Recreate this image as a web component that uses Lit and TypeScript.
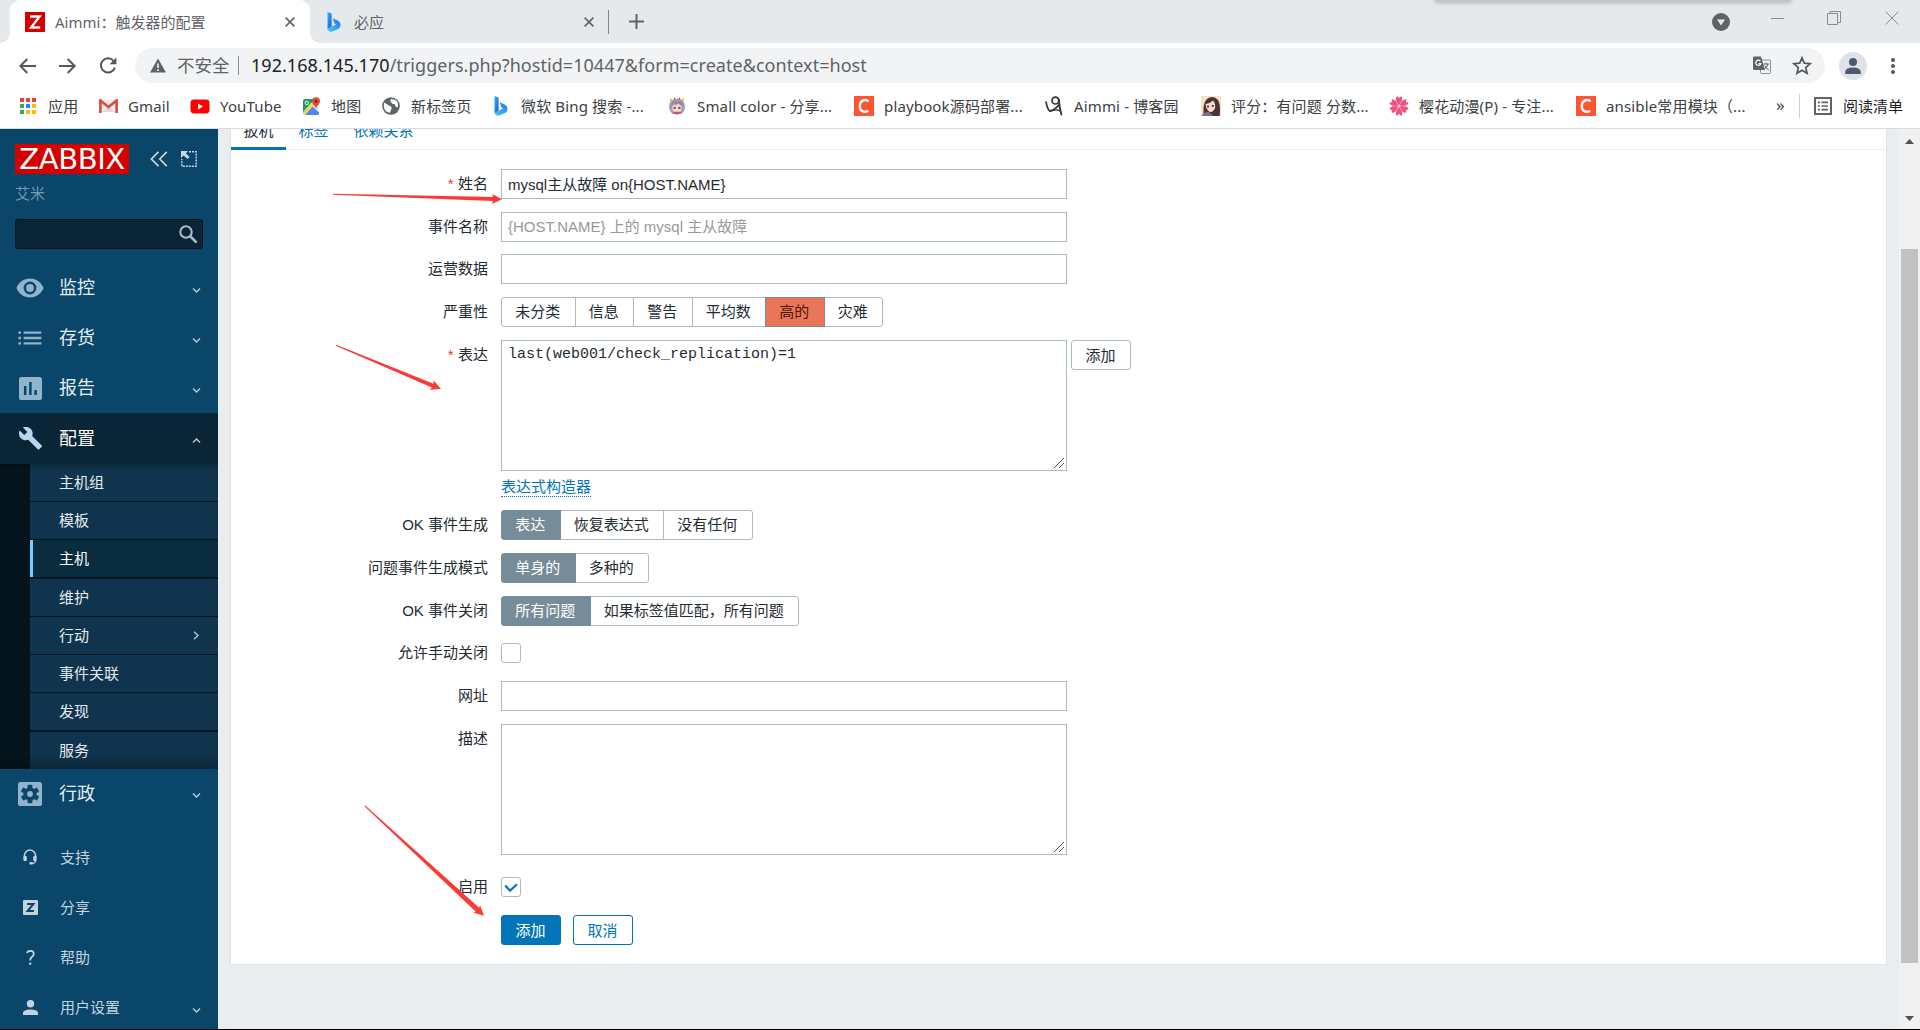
import { LitElement, html, svg, css, nothing, type TemplateResult } from "lit";
import { customElement } from "lit/decorators.js";
import { classMap } from "lit/directives/class-map.js";

const CHEVRON_DOWN = svg`<path d="M1 1.5 L4.5 5 L8 1.5" fill="none" stroke="currentColor" stroke-width="1.4"/>`;
const CHEVRON_UP = svg`<path d="M1 5.5 L4.5 2 L8 5.5" fill="none" stroke="currentColor" stroke-width="1.4"/>`;

const bingIcon = html`<svg width="14" height="20" viewBox="0 0 14 20">
  <defs>
    <linearGradient id="b" x1="0" y1="0" x2="1" y2="1">
      <stop offset="0" stop-color="#2fb9f5" /><stop offset="1" stop-color="#1b4fe0" />
    </linearGradient>
    <linearGradient id="c" x1="0" y1="1" x2="1" y2="0">
      <stop offset="0" stop-color="#3fd3f2" /><stop offset="1" stop-color="#1f6ff0" />
    </linearGradient>
  </defs>
  <path d="M0.5 0 L4.6 1.6 V14.5 L0.5 17.5 Z" fill="url(#b)" />
  <path d="M5.8 6.2 L11.5 9 Q13.8 10.5 13.5 13.5 Q13 16 11 17 L4.6 19.8 Q1.5 20 0.5 16.8 L9 12.5 L7.2 11.2 Z" fill="url(#c)" />
</svg>`;

const cIcon = html`<svg width="20" height="20" viewBox="0 0 20 20">
  <rect width="20" height="20" fill="#fc5531" />
  <path d="M14.6 5.2 C10.5 2.6 6 4.6 5.8 9.6 C5.6 15.2 9.6 17 14.2 15" fill="none" stroke="#fff" stroke-width="2.4" />
</svg>`;

interface Bookmark { text: string; icon: TemplateResult; }

const bookmarks: Bookmark[] = [
  {
    text: "应用",
    icon: html`<svg width="16" height="16" viewBox="0 0 16 16">
      <g fill="#ea4335"><rect width="4" height="4" /><rect x="6" width="4" height="4" /><rect x="12" width="4" height="4" /></g>
      <rect y="6" width="4" height="4" fill="#34a853" /><rect x="6" y="6" width="4" height="4" fill="#1a8cff" /><rect x="12" y="6" width="4" height="4" fill="#fbbc05" />
      <rect y="12" width="4" height="4" fill="#34a853" /><rect x="6" y="12" width="4" height="4" fill="#fbbc05" /><rect x="12" y="12" width="4" height="4" fill="#fbbc05" />
    </svg>`,
  },
  {
    text: "Gmail",
    icon: html`<svg width="19" height="14" viewBox="0 0 19 14">
      <path d="M2 0.5 H17 L18 2 V13 H1 V2 Z" fill="#eceff1" />
      <path d="M3 13 L9.5 7.5 L16 13 Z" fill="#d8dcdf" />
      <path d="M1.4 14 V1.5 L9.5 8 L17.6 1.5 V14" fill="none" stroke="#de4a3c" stroke-width="2.6" />
    </svg>`,
  },
  {
    text: "YouTube",
    icon: html`<svg width="20" height="15" viewBox="0 0 20 15"><rect x="0.5" y="0.5" width="19" height="14" rx="3.4" fill="#f00" /><path d="M8 4.4 L13 7.5 L8 10.6 Z" fill="#fff" /></svg>`,
  },
  {
    text: "地图",
    icon: html`<svg width="19" height="19" viewBox="0 0 19 19">
      <rect x="1" y="2" width="16" height="16" rx="2" fill="#e8eaed" />
      <path d="M1 4 Q1 2 3 2 H13 L1 15 Z" fill="#1f9d58" />
      <path d="M1 15.5 L9 8 L17 15.5 V17 Q17 18 15 18 H4 Z" fill="#4a89f3" />
      <path d="M1 16 L13 3 L15 5 L3 18 Q1 18 1 16Z" fill="#fdd34a" />
      <path d="M5 17.9 L9.6 12.3 L15.5 18 Z" fill="#4a89f3" />
      <path d="M14 0.3 A4 4 0 0 1 18 4.3 C18 7.5 14.6 8.6 14 12 C13.4 8.6 10 7.5 10 4.3 A4 4 0 0 1 14 0.3 Z" fill="#e14b3b" />
      <circle cx="14" cy="4.3" r="1.4" fill="#7d1f16" />
      <circle cx="4.8" cy="6" r="1.7" fill="none" stroke="#fff" stroke-width="0.9" />
    </svg>`,
  },
  {
    text: "新标签页",
    icon: html`<svg width="18" height="18" viewBox="0 0 18 18"><circle cx="9" cy="9" r="8.8" fill="#5f6368" />
      <path d="M2.2 5.6 Q6 8.2 8.4 9.2 Q10.2 9.6 9.6 11.6 Q8.6 12.4 8.8 14 Q8 16 6.6 15.6 Q2 14 1.8 9 Z" fill="#fff" />
      <path d="M9 2 Q7.6 4.4 9.4 5.2 Q9.6 7.4 12 7 Q14 7.6 13.4 9.6 L15.8 10.4 Q17 5 13 2.8 Z" fill="#fff" /></svg>`,
  },
  { text: "微软 Bing 搜索 -...", icon: bingIcon },
  {
    text: "Small color - 分享...",
    icon: html`<svg width="18" height="18" viewBox="0 0 18 18">
      <path d="M9 1.6 Q16.6 2 17 9.4 Q17 14 13 17 H5 Q1 14 1 9.4 Q1.4 2 9 1.6 Z" fill="#a59cb8" />
      <path d="M4.4 9 Q9 5 13.6 9 V12 Q13 15.5 9 16 Q5 15.5 4.4 12 Z" fill="#f4d9d2" />
      <path d="M3.4 9.4 L6 5.4 L8 8.4 L10 5.4 L14.6 9.4 L14 4.4 H4 Z" fill="#8d86a6" />
      <rect x="5.6" y="9.8" width="2" height="2.2" fill="#9b3f4f" /><rect x="10.4" y="9.8" width="2" height="2.2" fill="#9b3f4f" />
      <path d="M4.5 16 Q9 18.8 13.5 16 L12 14.8 H6 Z" fill="#c5555f" />
      <path d="M2 1 L4.6 2.8 L2.4 5Z M16 1 L13.4 2.8 L15.6 5Z" fill="#e7b93c" />
      <path d="M6.4 0 L7.6 2.4 H5.6Z M11.6 0 L12.4 2.4 H10.4Z" fill="#a3524f" />
    </svg>`,
  },
  { text: "playbook源码部署...", icon: cIcon },
  {
    text: "Aimmi - 博客园",
    icon: html`<svg width="18" height="20" viewBox="0 0 18 20" fill="none" stroke="#2f3237" stroke-linecap="round">
      <path d="M1 6 Q2.4 13 4.6 15 Q9 14.6 14.4 8.6" stroke-width="1.6" />
      <circle cx="10.4" cy="4.6" r="3.4" stroke-width="1.7" /><path d="M13.8 3.6 Q14.4 12 16.4 18.6" stroke-width="1.8" />
      <path d="M5 15.4 Q11 12.4 15 15" stroke-width="1.3" />
    </svg>`,
  },
  {
    text: "评分：有问题 分数...",
    icon: html`<svg width="20" height="20" viewBox="0 0 20 20">
      <rect width="20" height="20" fill="#f3e4c6" />
      <path d="M3 20 Q1 8 6 3 Q12 -1.5 17 4 Q20 9 18.6 20 Z" fill="#4b3234" />
      <path d="M4.6 8 Q9 7.4 12 4.4 Q15 8 14 12.4 Q12 16 9 16 Q5 14 4.6 8 Z" fill="#f8dcc9" />
      <path d="M0.5 20 Q3 15.6 8 16 L12.6 20 Z" fill="#77708f" />
      <rect x="6" y="9.6" width="2" height="1.8" fill="#5b2f33" /><rect x="10.8" y="9" width="2" height="1.8" fill="#5b2f33" />
    </svg>`,
  },
  {
    text: "樱花动漫(P) - 专注...",
    icon: html`<svg width="20" height="20" viewBox="-10 -10 20 20" fill="#f0527f">
      ${[0, 60, 120, 180, 240, 300].map(
        (a) => svg`<path d="M0 0 L-2.9 -5.4 Q-3.6 -9.2 -1.7 -9.8 L0 -7.8 L1.7 -9.8 Q3.6 -9.2 2.9 -5.4 Z" transform="rotate(${a})"/>`,
      )}
      <circle r="1.6" fill="#fbd3de" />
    </svg>`,
  },
  { text: "ansible常用模块（...", icon: cIcon },
];

@customElement("browser-chrome")
export class BrowserChrome extends LitElement {
  static styles = css`
    :host {
      display: block;
      height: 129px;
      box-sizing: border-box;
      border-bottom: 1px solid #d9dbde;
      background: #fff;
      color: #5f6368;
      font: 15px/20px "Noto Sans", "Noto Sans CJK SC", sans-serif;
      overflow: hidden;
    }
    svg { display: block; flex: none; }
    .strip { display: flex; align-items: center; height: 43px; background: #e6e9ec; position: relative; }
    .tab { display: flex; align-items: center; box-sizing: border-box; height: 43px; }
    .active { width: 300px; margin-left: 10px; padding: 0 15px; background: #fff; border-radius: 10px 10px 0 0; position: relative; }
    .active::before, .active::after { content: ""; position: absolute; bottom: 0; width: 10px; height: 10px; }
    .active::before { left: -10px; background: radial-gradient(circle at 0 0, transparent 9.5px, #fff 10px); }
    .active::after { right: -10px; background: radial-gradient(circle at 100% 0, transparent 9.5px, #fff 10px); }
    .idle { width: 298px; padding: 0 14px 0 17px; border: 0; }
    .title { flex: 1; padding-left: 10px; white-space: nowrap; }
    .idle .title { padding-left: 13px; }
    .sep { width: 1px; height: 24px; background: #84888c; margin-right: 20px; }
    .controls { display: flex; align-items: center; margin-left: auto; padding-right: 21px; }
    .controls svg:nth-child(1) { margin: 0 41px 0 0; }
    .controls svg:nth-child(2) { margin: -7px 42px 0 0; }
    .controls svg:nth-child(3) { margin: -7px 44px 0 0; }
    .controls svg:nth-child(4) { margin: -7px 0 0 0; }
    .shade { position: absolute; left: 1436px; top: -6px; width: 354px; height: 8px; background: #c4c6c9; box-shadow: 0 0 4px 1px #b4b6ba; }
    .bar { display: flex; align-items: center; height: 45px; padding: 0 25px 0 19px; }
    .nav { display: flex; gap: 23px; width: 116px; align-items: center; }
    .omni { flex: 1; display: flex; align-items: center; height: 35px; border-radius: 18px; background: #f1f3f4; padding: 0 13px 0 15px; font-size: 17.5px; }
    .unsafe { margin: 0 8px 2px 11px; }
    .vsep { width: 1.5px; height: 19px; background: #8d9195; margin-right: 12px; }
    .url { flex: 1; font-size: 18px; letter-spacing: 0.04px; white-space: nowrap; padding-bottom: 2px; }
    .host { color: #202124; }
    .star { margin-left: 21px; }
    .avatar { margin: 0 24px 0 14px; }
    .marks { display: grid; grid-template-columns: 80px 92px 111px 80px 110px 176px 187px 190px 157px 188px 187px 200px 1fr; padding-left: 18px; height: 36px; align-items: center; color: #3c4043; }
    .mark { display: flex; align-items: center; gap: 10px; white-space: nowrap; letter-spacing: 0.15px; }
    .fav { width: 20px; display: flex; justify-content: center; flex: none; }
    .tail { display: flex; align-items: center; white-space: nowrap; }
    .more { width: 23px; font-size: 17px; line-height: 16px; padding-bottom: 3px; box-sizing: border-box; }
    .rule { width: 1px; height: 24px; background: #cfd2d5; margin-right: 14px; }
    .list { margin-right: 11px; }
    .reading { color: #202124; }
  `;

  private cross() {
    return html`<svg width="10" height="10" viewBox="0 0 10 10"><path d="M0.6 0.6 L9.4 9.4 M9.4 0.6 L0.6 9.4" stroke="#5f6368" stroke-width="1.6" /></svg>`;
  }

  render() {
    return html`
      <div class="strip">
        <div class="tab active">
          <svg width="20" height="20" viewBox="0 0 20 20"><rect width="20" height="20" fill="#d40000" /><path d="M5 4.5 H14.6 L6 15.5 H15.2" fill="none" stroke="#fff" stroke-width="2.3" /></svg>
          <span class="title">Aimmi：触发器的配置</span>${this.cross()}
        </div>
        <div class="tab idle">${bingIcon}<span class="title">必应</span>${this.cross()}</div>
        <div class="sep"></div>
        <svg width="15" height="15" viewBox="0 0 15 15"><path d="M7.5 0 V15 M0 7.5 H15" stroke="#5f6368" stroke-width="2" /></svg>
        <div class="controls">
          <svg width="18" height="18" viewBox="0 0 18 18"><circle cx="9" cy="9" r="9" fill="#5f6368" /><path d="M5 6.5 H13 L9 12.5 Z" fill="#e6e9ec" /></svg>
          <svg width="14" height="14" viewBox="0 0 14 14"><path d="M0 7.5 H13" stroke="#8a8d90" /></svg>
          <svg width="14" height="14" viewBox="0 0 14 14"><path d="M0.5 2.5 H10.5 V13.5 H0.5 Z M3 2.5 V0.5 H13.5 V11.5 H10.5" fill="none" stroke="#8a8d90" /></svg>
          <svg width="14" height="14" viewBox="0 0 14 14"><path d="M0.5 0.5 L13.5 13.5 M13.5 0.5 L0.5 13.5" stroke="#8a8d90" /></svg>
        </div>
        <div class="shade"></div>
      </div>
      <div class="bar">
        <div class="nav">
          <svg width="17" height="16" viewBox="0 0 17 16"><path d="M17 8 H1.5 M8.3 1 L1.3 8 L8.3 15" fill="none" stroke="#54585c" stroke-width="2" /></svg>
          <svg width="17" height="16" viewBox="0 0 17 16"><path d="M0 8 H15.5 M8.7 1 L15.7 8 L8.7 15" fill="none" stroke="#54585c" stroke-width="2" /></svg>
          <svg width="18" height="17" viewBox="0 0 18 17"><path d="M14.6 4 A7.1 7.1 0 1 0 15.8 10.6" fill="none" stroke="#54585c" stroke-width="2" /><path d="M17.4 0.5 V7.2 H10.6 Z" fill="#54585c" /></svg>
        </div>
        <div class="omni">
          <svg width="16" height="15" viewBox="0 0 16 15"><path d="M8 0.5 L16 14.5 H0 Z" fill="#5f6368" /><path d="M8 5.5 V10 M8 11.2 V13" stroke="#f1f3f4" stroke-width="1.6" /></svg>
          <span class="unsafe">不安全</span><span class="vsep"></span>
          <span class="url"><span class="host">192.168.145.170</span>/triggers.php?hostid=10447&amp;form=create&amp;context=host</span>
          <svg width="18" height="19" viewBox="0 0 18 19">
            <rect x="7.5" y="4" width="10" height="13.5" rx="1" fill="none" stroke="#8a8d91" />
            <path d="M1 0.5 H8 L12 14 H1.5 Q0 14 0 12.5 V1.5 Q0 0.5 1 0.5Z" fill="#5f6368" />
            <path d="M7.4 5.2 A2.6 2.6 0 1 0 7.8 7.6 H5.6" fill="none" stroke="#fff" stroke-width="1.2" />
            <path d="M10.5 8 H16 M13.2 6.8 V8 M15 8 Q14 12 10.8 13.8 M11.8 9.6 Q13 12.4 15.8 14" fill="none" stroke="#5f6368" />
          </svg>
          <svg class="star" width="20" height="19" viewBox="0 0 20 19"><path d="M10 1.8 L12.3 7.2 L18.2 7.7 L13.7 11.6 L15.1 17.3 L10 14.2 L4.9 17.3 L6.3 11.6 L1.8 7.7 L7.7 7.2 Z" fill="none" stroke="#54585c" stroke-width="1.7" /></svg>
        </div>
        <svg class="avatar" width="28" height="28" viewBox="0 0 28 28"><circle cx="14" cy="14" r="14" fill="#dfe2e7" /><circle cx="14" cy="10" r="4" fill="#4d5a70" /><path d="M6.2 22 V20 Q6.2 15.6 14 15.4 Q21.8 15.6 21.8 20 V22 Z" fill="#4d5a70" /></svg>
        <svg width="4" height="16" viewBox="0 0 4 16" fill="#54585c"><circle cx="2" cy="2" r="2" /><circle cx="2" cy="8" r="2" /><circle cx="2" cy="14" r="2" /></svg>
      </div>
      <div class="marks">
        ${bookmarks.map((b) => html`<div class="mark"><span class="fav">${b.icon}</span><span>${b.text}</span></div>`)}
        <div class="tail">
          <span class="more">»</span><span class="rule"></span>
          <svg class="list" width="18" height="18" viewBox="0 0 18 18"><rect x="1" y="1" width="16" height="16" fill="none" stroke="#5f6368" stroke-width="2" /><path d="M4 5.4 H6 M4 9 H6 M4 12.6 H6 M7.4 5.4 H14 M7.4 9 H14 M7.4 12.6 H14" stroke="#5f6368" stroke-width="1.6" /></svg>
          <span class="reading">阅读清单</span>
        </div>
      </div>
    `;
  }
}

interface MenuEntry { text: string; icon: TemplateResult; open?: boolean; }

const eye = html`<svg width="28" height="20" viewBox="0 0 28 20"><path d="M14 0.5 C7.6 0.5 2.6 4.4 0.4 10 C2.6 15.6 7.6 19.5 14 19.5 C20.4 19.5 25.4 15.6 27.6 10 C25.4 4.4 20.4 0.5 14 0.5 Z M14 16.4 A6.4 6.4 0 1 1 14 3.6 A6.4 6.4 0 0 1 14 16.4 Z" fill="currentColor" /><circle cx="14" cy="10" r="3.9" fill="currentColor" /></svg>`;
const list = html`<svg width="24" height="14" viewBox="0 0 24 14"><path d="M0.4 1.6 H3 M0.4 7 H3 M0.4 12.4 H3 M5.6 1.6 H23.4 M5.6 7 H23.4 M5.6 12.4 H23.4" stroke="currentColor" stroke-width="2.4" /></svg>`;
const chart = html`<svg width="23" height="23" viewBox="0 0 23 23"><rect width="23" height="23" rx="2.6" fill="currentColor" /><path d="M6.2 9 V18 M11.4 5 V18 M16.6 13 V18" stroke="#0a466a" stroke-width="2.5" /></svg>`;
const wrench = html`<svg width="23" height="23" viewBox="1 1.6 22 21.4"><path d="M22.7 19 L13.6 9.9 C14.5 7.6 14 4.9 12.1 3 C10.1 1 7.1 0.6 4.7 1.7 L9 6 L6 9 L1.6 4.7 C0.4 7.1 0.9 10.1 2.9 12.1 C4.8 14 7.5 14.5 9.8 13.6 L18.9 22.7 C19.3 23.1 19.9 23.1 20.3 22.7 L22.6 20.4 C23.1 20 23.1 19.3 22.7 19 Z" fill="currentColor" /></svg>`;
const gear = html`<svg width="24" height="24" viewBox="-12 -12 24 24"><rect x="-12" y="-12" width="24" height="24" rx="2.6" fill="currentColor" />
  <g fill="#0a466a"><circle r="6.6" />${[0, 60, 120, 180, 240, 300].map((a) => svg`<rect x="-2.4" y="-9.2" width="4.8" height="5" rx="0.8" transform="rotate(${a})"/>`)}</g>
  <circle r="2.9" fill="currentColor" /></svg>`;

const topMenu: MenuEntry[] = [
  { text: "监控", icon: eye },
  { text: "存货", icon: list },
  { text: "报告", icon: chart },
  { text: "配置", icon: wrench, open: true },
];

const subMenu = ["主机组", "模板", "主机", "维护", "行动", "事件关联", "发现", "服务"];

const footMenu: MenuEntry[] = [
  {
    text: "支持",
    icon: html`<svg width="14" height="16" viewBox="0 0 14 16"><path d="M1.4 9 V6.8 A5.6 5.8 0 0 1 12.6 6.8 V9" fill="none" stroke="currentColor" stroke-width="1.6" /><rect x="0.4" y="7" width="3.4" height="5" rx="1" fill="currentColor" /><rect x="10.2" y="7" width="3.4" height="5" rx="1" fill="currentColor" /><path d="M12.8 11 Q12.4 14.4 9.4 14.4" fill="none" stroke="currentColor" stroke-width="1.3" /><rect x="6.4" y="13" width="3.6" height="2.6" rx="1" fill="currentColor" /></svg>`,
  },
  {
    text: "分享",
    icon: html`<svg width="15" height="15" viewBox="0 0 15 15"><rect width="15" height="15" rx="1" fill="currentColor" /><path d="M4 4 H10.4 L4.6 11 H11" fill="none" stroke="#0a466a" stroke-width="2" /></svg>`,
  },
  {
    text: "帮助",
    icon: html`<svg width="9" height="15" viewBox="0 0 9 15"><path d="M1 3.2 Q1.4 0.9 4.4 0.9 Q7.8 1 7.8 3.8 Q7.8 5.6 6 6.8 Q4.2 8 4.2 10.6" fill="none" stroke="currentColor" stroke-width="1.8" /><rect x="3.2" y="12.6" width="2.1" height="2.2" fill="currentColor" /></svg>`,
  },
  {
    text: "用户设置",
    open: false,
    icon: html`<svg width="15" height="15" viewBox="0 0 15 15"><circle cx="7.5" cy="3.8" r="3.7" fill="currentColor" /><path d="M0 15 V13 Q0 9.6 7.5 9.4 Q15 9.6 15 13 V15 Z" fill="currentColor" /></svg>`,
  },
];

@customElement("side-nav")
export class SideNav extends LitElement {
  static styles = css`
    :host {
      display: flex;
      flex-direction: column;
      width: 218px;
      flex: none;
      background: #0a466a;
      color: #e4ecf1;
      font: 15px/20px "Liberation Sans", "Noto Sans CJK SC", sans-serif;
    }
    :host > * { flex: none; }
    svg { display: block; flex: none; }
    .brand { display: flex; align-items: center; padding: 15px 21px 0 15px; height: 30px; color: #c9d8e1; }
    .logo { display: flex; align-items: center; justify-content: center; width: 114px; height: 30px; background: #d40000; color: #fff; font: 29px/30px "DejaVu Sans", sans-serif; letter-spacing: -0.4px; }
    .collapse { margin: 0 13px 0 21px; }
    .server { padding: 10px 15px 0; color: #7499b0; line-height: 20px; }
    .search { display: flex; align-items: center; justify-content: flex-end; box-sizing: border-box; width: 188px; height: 30px; margin: 15px 0 14px 15px; padding: 1px 4px 0 0; background: #0a2636; border: 1px solid #03121b; border-radius: 3px; color: #a3bdcd; }
    .entry { display: flex; align-items: center; height: 50px; padding-right: 17px; font-size: 18px; }
    .entry .icon { display: flex; justify-content: center; width: 60px; margin-right: -1px; color: #8fb4cb; }
    .entry .name { flex: 1; }
    .entry .chev { margin-top: 4px; }
    .entry.open { height: 51px; background: #0a2636; color: #fff; }
    .entry.open .icon { color: #b4d6ee; }
    .sub { display: grid; gap: 1px; padding-left: 30px; background: linear-gradient(90deg, #03141d 30px, #041722 30px); height: 305px; align-content: start; position: relative; }
    .sub::after { content: ""; position: absolute; inset: 0; background: linear-gradient(#0003, #0000 8px, #0000 290px, #0004); }
    .child { display: flex; align-items: center; justify-content: space-between; height: 37px; padding: 0 19px 0 29px; background: #10344d; }
    .gap { margin-top: 1px; }
    .current { background: #0a2c3f; color: #fff; box-shadow: inset 3px 0 #7cc8ff; }
    .admin .entry { height: 49px; }
    .foot { margin-top: 15px; }
    .foot .entry { font-size: 15px; color: #c3d3dd; }
    .foot .icon { color: #c3d3dd; width: 61px; margin-right: -1px; }
    .foot .icon svg { margin: -2px 1px 0 0; }
    .chev { color: #b9ccd8; }
  `;

  private entry(m: MenuEntry, chevron: boolean) {
    return html`<div class=${classMap({ entry: true, open: !!m.open })}>
      <span class="icon">${m.icon}</span><span class="name">${m.text}</span>
      ${chevron ? html`<svg class="chev" width="9" height="7" viewBox="0 0 9 7">${m.open ? CHEVRON_UP : CHEVRON_DOWN}</svg>` : nothing}
    </div>`;
  }

  render() {
    return html`
      <div class="brand">
        <span class="logo">ZABBIX</span>
        <svg class="collapse" width="18" height="16" viewBox="0 0 18 16"><path d="M8.4 0.8 L1.4 8 L8.4 15.2 M16.8 0.8 L9.8 8 L16.8 15.2" fill="none" stroke="currentColor" stroke-width="1.7" /></svg>
        <svg width="16" height="16" viewBox="0 0 16 16"><path d="M8 0.8 H15.2 V15.2 H0.8 V8" fill="none" stroke="currentColor" stroke-width="1.4" stroke-dasharray="2 1" /><path d="M0 0 H7 L4.8 2.2 L8.6 6 L6.4 8 L2.6 4.4 L0 7 Z" fill="currentColor" /></svg>
      </div>
      <div class="server">艾米</div>
      <div class="search"><svg width="19" height="19" viewBox="0 0 19 19"><circle cx="7" cy="7" r="5.7" fill="none" stroke="currentColor" stroke-width="2.1" /><path d="M11 11 L17.6 17.6" stroke="currentColor" stroke-width="2.6" /></svg></div>
      ${topMenu.map((m) => this.entry(m, true))}
      <div class="sub">
        ${subMenu.map(
          (s, i) => html`<div class=${classMap({ child: true, current: i === 2, gap: i === 3 || i === 7 })}>
            <span>${s}</span>
            ${s === "行动" ? html`<svg width="6" height="9" viewBox="0 0 6 9"><path d="M1 0.8 L5 4.5 L1 8.2" fill="none" stroke="#b9ccd8" stroke-width="1.3" /></svg>` : nothing}
          </div>`,
        )}
      </div>
      <div class="admin">${this.entry({ text: "行政", icon: gear }, true)}</div>
      <div class="foot">${footMenu.map((m) => this.entry(m, m.open === false))}</div>
    `;
  }
}

interface Option { text: string; state?: "on" | "high"; }

@customElement("trigger-form")
export class TriggerForm extends LitElement {
  static styles = css`
    :host {
      display: block;
      box-sizing: border-box;
      width: 1657px;
      height: 836px;
      background: #fff;
      border: 1px solid #dfe4e7;
      border-top: 0;
      color: #1f2c33;
      font: 15px/20px "Liberation Sans", "Noto Sans CJK SC", sans-serif;
    }
    .tabs { display: flex; height: 21px; box-sizing: border-box; border-bottom: 1px solid #ebeef0; color: #0275b8; }
    .tab { height: 21px; box-sizing: border-box; padding: 0 12.5px; }
    .tab span { display: block; margin-top: -8px; }
    .tab.sel { color: #1f2c33; border-bottom: 3px solid #0275b8; }
    .grid {
      display: grid;
      grid-template-columns: 257px 1fr;
      column-gap: 13px;
      grid-template-rows: 43px 42px 43px 43px 170px 43px 43px 42px 43px 43px 148px 43px 30px;
      padding-top: 19px;
    }
    .label { text-align: right; line-height: 29px; white-space: nowrap; }
    .req { color: #e33734; margin-right: 4.5px; }
    .cell { display: flex; align-items: flex-start; }
    .stack { display: flex; flex-direction: column; align-items: flex-start; }
    .text, .area { box-sizing: border-box; width: 566px; margin: 0; border: 1px solid #acbbc2; border-radius: 0; background: #fff; color: #1f2c33; font: inherit; outline: 0; }
    .text { height: 30px; padding: 0 6px 2px; }
    .text::placeholder { color: #999; opacity: 1; }
    .box { position: relative; height: 131px; }
    .area { display: block; height: 131px; padding: 5px 6px; resize: none; overflow: hidden; font: 15px/18px "Liberation Mono", monospace; }
    .grip { position: absolute; right: 3px; bottom: 3px; }
    .link { color: #0275b8; border-bottom: 1px dotted #0275b8; line-height: 18px; margin-top: 7px; }
    .seg { display: flex; }
    .opt { box-sizing: border-box; height: 30px; line-height: 27px; padding: 0 14.2px 0 13.3px; border: 1px solid #acbbc2; margin-left: -1px; white-space: nowrap; }
    .opt:first-child { margin-left: 0; border-radius: 3px 0 0 3px; }
    .opt:last-child { border-radius: 0 3px 3px 0; }
    .opt.on { background: #768d99; border-color: #768d99; color: #fff; position: relative; }
    .opt.high { background: #e97659; border-color: #768d99; color: #4f1506; position: relative; }
    .btn { box-sizing: border-box; width: 60px; height: 30px; padding: 1px 1px 0 0; border: 1px solid #acbbc2; border-radius: 3px; background: #fff; color: #1f2c33; font: inherit; line-height: 27px; }
    .side { margin-left: 4px; }
    .primary { background: #0275b8; border-color: #0275b8; color: #fff; margin-right: 12px; }
    .alt { border-color: #0275b8; color: #0275b8; }
    .check { box-sizing: border-box; width: 20px; height: 20px; margin-top: 5px; border: 1px solid #acbbc2; border-radius: 3px; }
    .check svg { display: block; margin: 5px 0 0 2px; }
  `;

  private label(text: string, required = false) {
    return html`<div class="label">${required ? html`<span class="req">*</span>` : nothing}${text}</div>`;
  }

  private input(value = "", placeholder = "") {
    return html`<div class="cell"><input class="text" .value=${value} placeholder=${placeholder} spellcheck="false" /></div>`;
  }

  private segments(options: Option[]) {
    return html`<div class="seg">
      ${options.map((o) => html`<div class=${classMap({ opt: true, on: o.state === "on", high: o.state === "high" })}>${o.text}</div>`)}
    </div>`;
  }

  private area(value = "") {
    return html`<div class="box">
      <textarea class="area" .value=${value} spellcheck="false"></textarea>
      <svg class="grip" width="10" height="10" viewBox="0 0 10 10"><path d="M0 10 L10 0 M5 10 L10 5" stroke="#555" stroke-width="1" /></svg>
    </div>`;
  }

  render() {
    return html`
      <div class="tabs">
        <div class="tab sel"><span>扳机</span></div>
        <div class="tab"><span>标签</span></div>
        <div class="tab"><span>依赖关系</span></div>
      </div>
      <div class="grid">
        ${this.label("姓名", true)}${this.input("mysql主从故障 on{HOST.NAME}")}
        ${this.label("事件名称")}${this.input("", "{HOST.NAME} 上的 mysql 主从故障")}
        ${this.label("运营数据")}${this.input()}
        ${this.label("严重性")}${this.segments([{ text: "未分类" }, { text: "信息" }, { text: "警告" }, { text: "平均数" }, { text: "高的", state: "high" }, { text: "灾难" }])}
        ${this.label("表达", true)}
        <div class="stack">
          <div class="cell">${this.area("last(web001/check_replication)=1")}<button class="btn side">添加</button></div>
          <span class="link">表达式构造器</span>
        </div>
        ${this.label("OK 事件生成")}${this.segments([{ text: "表达", state: "on" }, { text: "恢复表达式" }, { text: "没有任何" }])}
        ${this.label("问题事件生成模式")}${this.segments([{ text: "单身的", state: "on" }, { text: "多种的" }])}
        ${this.label("OK 事件关闭")}${this.segments([{ text: "所有问题", state: "on" }, { text: "如果标签值匹配，所有问题" }])}
        ${this.label("允许手动关闭")}<div class="check"></div>
        ${this.label("网址")}${this.input()}
        ${this.label("描述")}<div class="cell">${this.area()}</div>
        ${this.label("启用")}
        <div class="check"><svg width="14" height="10" viewBox="0 0 14 10"><path d="M1.2 2.6 L6 7.6 L13 1.2" fill="none" stroke="#0275b8" stroke-width="2.2" /></svg></div>
        <span></span>
        <div class="cell"><button class="btn primary">添加</button><button class="btn alt">取消</button></div>
      </div>
    `;
  }
}

/** Tapered arrow outline from a thin tail to a solid head. */
function arrow(x1: number, y1: number, x2: number, y2: number, neck = 2, head = 10, wing = 5) {
  const len = Math.hypot(x2 - x1, y2 - y1);
  const ux = (x2 - x1) / len;
  const uy = (y2 - y1) / len;
  const at = (back: number, side: number) =>
    `${(x2 - ux * back - uy * side).toFixed(1)},${(y2 - uy * back + ux * side).toFixed(1)}`;
  return [at(len, 0.5), at(head - 1, neck), at(head, wing), at(0, 0), at(head, -wing), at(head - 1, -neck), at(len, -0.5)].join(" ");
}

@customElement("app-root")
export class AppRoot extends LitElement {
  static styles = css`
    :host { display: block; position: relative; width: 1920px; height: 1030px; overflow: hidden; background: #e9edf0; }
    .page { display: flex; height: 900px; overflow: hidden; border-bottom: 1px solid #000; }
    .main { flex: 1; padding-left: 12px; overflow: hidden; }
    .scroll { display: flex; flex-direction: column; align-items: center; justify-content: space-between; box-sizing: border-box; width: 21px; padding: 10px 0 8px; background: #f0f0f0; }
    .scroll svg { display: block; }
    .thumb { width: 17px; height: 714px; margin: 105px 0 auto; background: #c1c1c1; }
    .marks { position: absolute; left: 0; top: 0; pointer-events: none; }
  `;

  render() {
    return html`
      <browser-chrome></browser-chrome>
      <div class="page">
        <side-nav></side-nav>
        <div class="main"><trigger-form></trigger-form></div>
        <div class="scroll">
          <svg width="9" height="5" viewBox="0 0 9 5"><path d="M0 5 L4.5 0 L9 5 Z" fill="#505050" /></svg>
          <div class="thumb"></div>
          <svg width="9" height="5" viewBox="0 0 9 5"><path d="M0 0 L4.5 5 L9 0 Z" fill="#505050" /></svg>
        </div>
      </div>
      <svg class="marks" width="1920" height="1030" viewBox="0 0 1920 1030" fill="#fb3a36">
        <polygon points=${arrow(333, 194.3, 502, 199.3)} />
        <polygon points=${arrow(336, 345.3, 441, 389)} />
        <polygon points=${arrow(365, 806, 484, 915.7, 2.6)} />
      </svg>
    `;
  }
}
